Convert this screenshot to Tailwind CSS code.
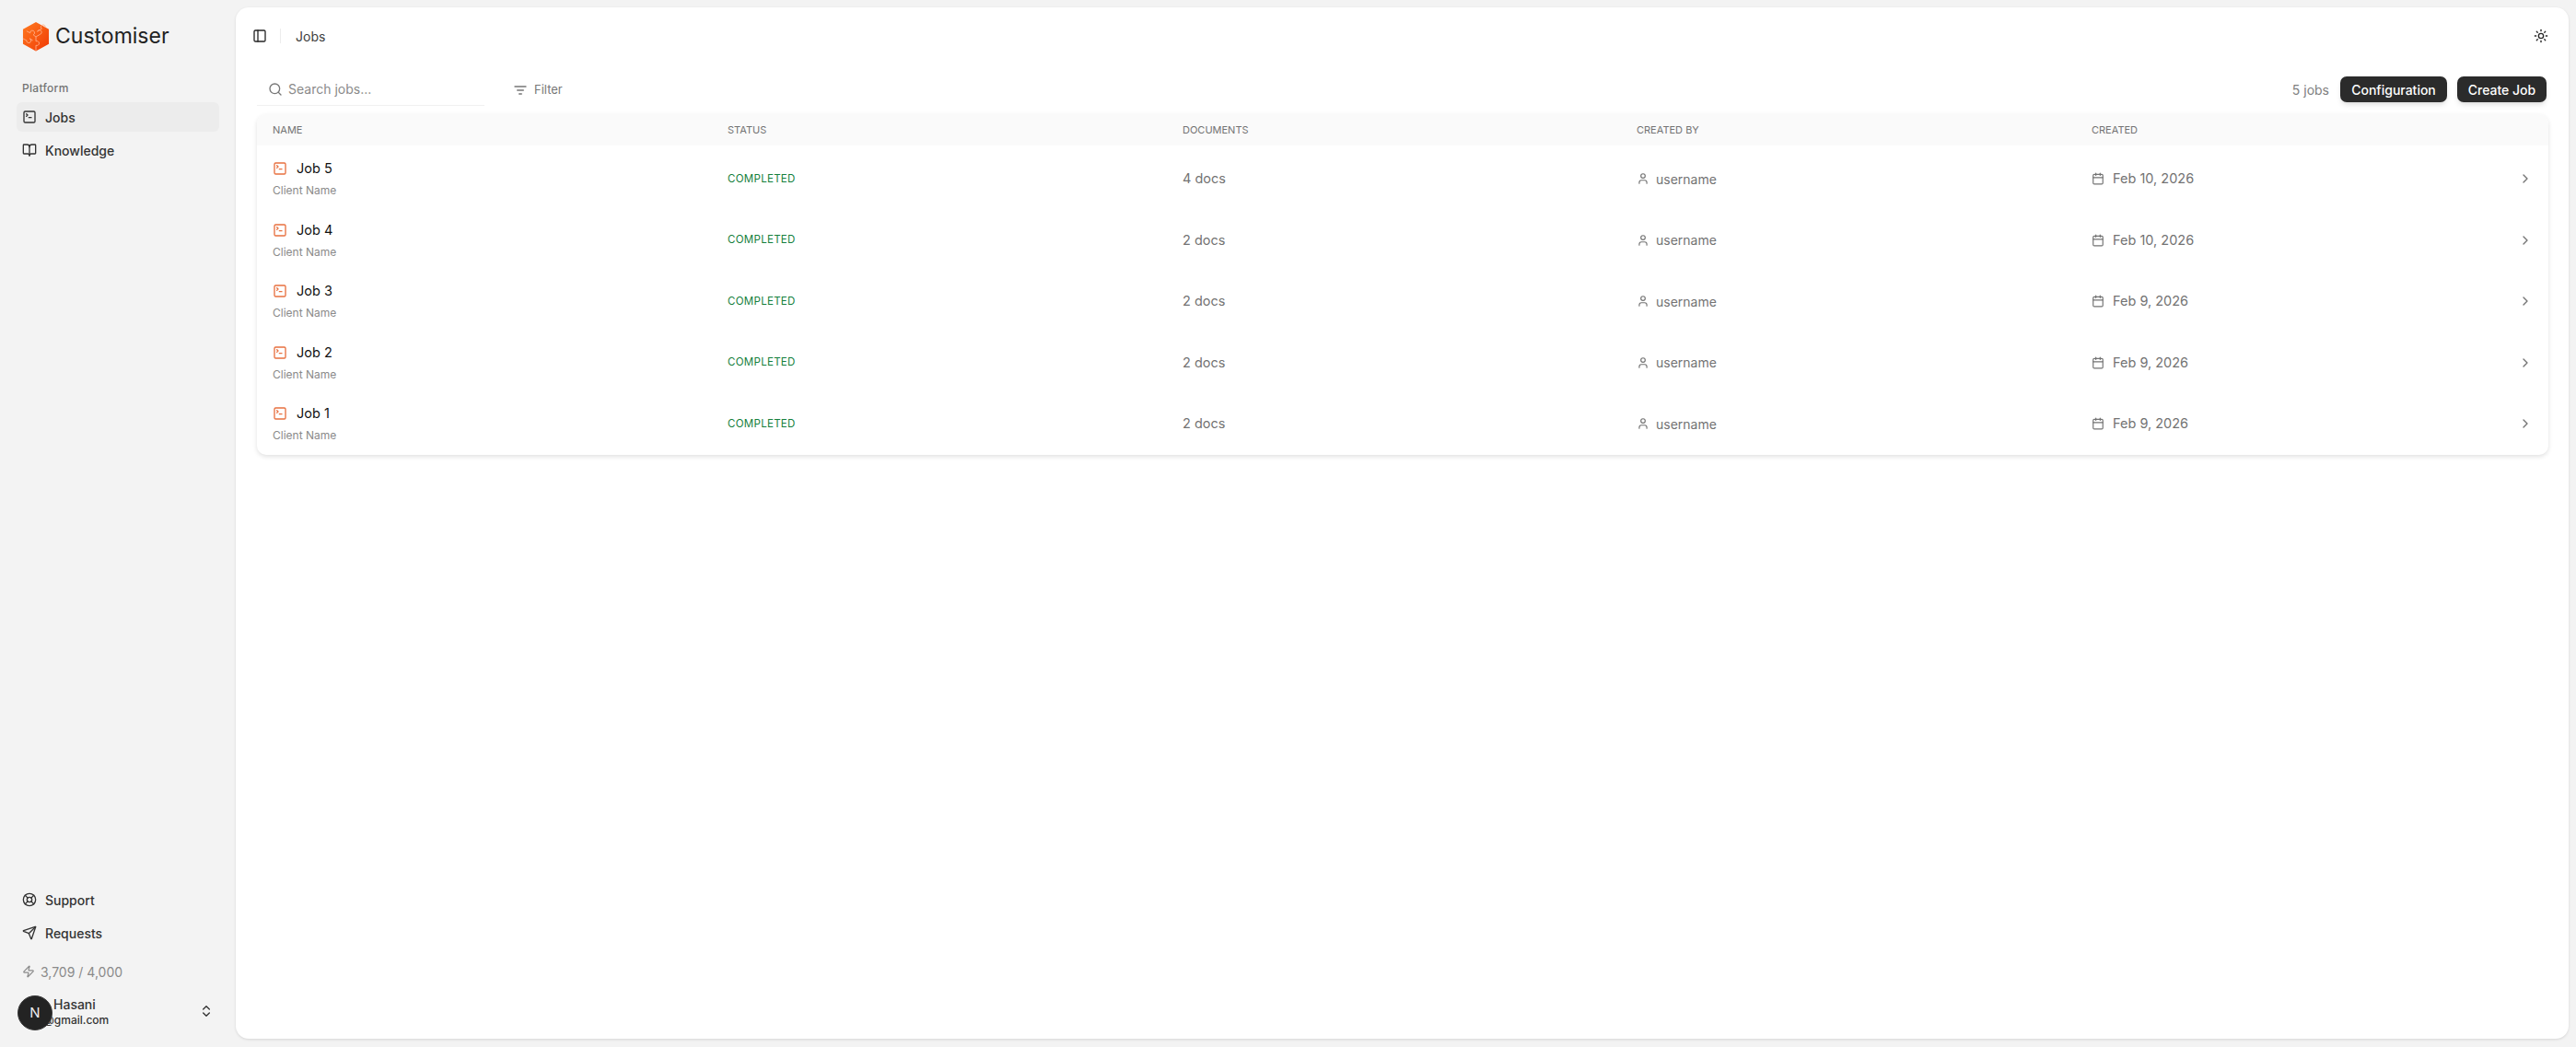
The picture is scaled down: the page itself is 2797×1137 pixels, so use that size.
<!DOCTYPE html>
<html lang="en">
<head>
  <meta charset="UTF-8" />
  <meta name="viewport" content="width=device-width, initial-scale=1.0"/>
  <title>Customiser - Jobs</title>
  <script src="https://cdn.jsdelivr.net/npm/@tailwindcss/browser@4"></script>
</head>
<body class="bg-[#f3f3f3] h-[1137px] overflow-hidden font-['Inter',sans-serif] text-[#262626]">
  <div class="flex h-[1135px] bg-[#f3f3f3]">

    <!-- sidebar -->
    <aside class="w-[256px] shrink-0 flex flex-col px-4 relative">
      <div class="flex items-center gap-[6px] pl-2 pt-[21px] h-[58px]">
        <svg class="w-[30px] h-[34px]" viewBox="0 0 31 34">
          <defs>
            <linearGradient id="cube" x1="0" y1="0" x2="1" y2="1">
              <stop offset="0" stop-color="#ff7a1f"/>
              <stop offset="1" stop-color="#f03a06"/>
            </linearGradient>
          </defs>
          <path d="M15.5 0.5 L30 8.5 V25 L15.5 33 L1 25 V8.5 Z" fill="url(#cube)"/>
          <path d="M5 10.5 L9 12.7 a2.5 2.5 0 1 1 3.5 2 L15.5 17 L20 14.3 a2.5 2.5 0 1 0 -3 -3.2 L22 8 a2.5 2.5 0 1 1 4 -1.5 M15.5 17 V22 a2.5 2.5 0 1 1 0 4.5 V33 M1 19 L5 21 a2.5 2.5 0 1 0 3.5 -2 L12 21" fill="none" stroke="#ffb08a" stroke-width="0.9"/>
        </svg>
        <span class="text-[23px] leading-none text-[#222]">Customiser</span>
      </div>

      <div class="mt-[30px] pl-[8px] text-[12px] leading-4 font-medium text-[#737373] tracking-[0.3px]">Platform</div>
      <nav class="mt-[7px] flex flex-col gap-[4px] mx-[2px]">
        <a class="h-[32px] flex items-center gap-[9px] pl-[6px] rounded-md bg-[#ececec] text-[14px] font-medium text-[#333]">
          <svg class="w-4 h-4" viewBox="0 0 24 24" fill="none" stroke="currentColor" stroke-width="2" stroke-linecap="round" stroke-linejoin="round"><path d="m7 11 2-2-2-2"/><path d="M11 13h4"/><rect width="18" height="18" x="3" y="3" rx="2"/></svg>
          Jobs
        </a>
        <a class="h-[32px] flex items-center gap-[9px] pl-[6px] text-[14px] font-medium text-[#333]">
          <svg class="w-4 h-4" viewBox="0 0 24 24" fill="none" stroke="currentColor" stroke-width="2" stroke-linecap="round" stroke-linejoin="round"><path d="M12 7v14"/><path d="M3 18a1 1 0 0 1-1-1V4a1 1 0 0 1 1-1h5a4 4 0 0 1 4 4 4 4 0 0 1 4-4h5a1 1 0 0 1 1 1v13a1 1 0 0 1-1 1h-6a3 3 0 0 0-3 3 3 3 0 0 0-3-3z"/></svg>
          Knowledge
        </a>
      </nav>

      <div class="mt-auto flex flex-col gap-[4px] mx-[2px]">
        <a class="h-[32px] flex items-center gap-[9px] pl-[6px] text-[14px] font-medium text-[#333]">
          <svg class="w-4 h-4" viewBox="0 0 24 24" fill="none" stroke="currentColor" stroke-width="2" stroke-linecap="round" stroke-linejoin="round"><circle cx="12" cy="12" r="10"/><path d="m4.93 4.93 4.24 4.24"/><path d="m14.83 9.17 4.24-4.24"/><path d="m14.83 14.83 4.24 4.24"/><path d="m9.17 14.83-4.24 4.24"/><circle cx="12" cy="12" r="4"/></svg>
          Support
        </a>
        <a class="h-[32px] flex items-center gap-[9px] pl-[6px] text-[14px] font-medium text-[#333]">
          <svg class="w-4 h-4" viewBox="0 0 24 24" fill="none" stroke="currentColor" stroke-width="2" stroke-linecap="round" stroke-linejoin="round"><path d="M14.536 21.686a.5.5 0 0 0 .937-.024l6.5-19a.496.496 0 0 0-.635-.635l-19 6.5a.5.5 0 0 0-.024.937l7.93 3.18a2 2 0 0 1 1.112 1.11z"/><path d="m21.854 2.147-10.94 10.939"/></svg>
          Requests
        </a>
      </div>

      <div class="mt-[16px] pl-2 h-[20px] flex items-center gap-[6px] text-[14px] text-[#8a8a8a]">
        <svg class="w-[14px] h-[14px]" viewBox="0 0 24 24" fill="none" stroke="currentColor" stroke-width="2" stroke-linecap="round" stroke-linejoin="round"><path d="M4 14a1 1 0 0 1-.78-1.63l9.9-10.2a.5.5 0 0 1 .86.46l-1.92 6.02A1 1 0 0 0 13 10h7a1 1 0 0 1 .78 1.63l-9.9 10.2a.5.5 0 0 1-.86-.46l1.92-6.02A1 1 0 0 0 11 14z"/></svg>
        3,709 / 4,000
      </div>

      <div class="mt-[15px] mb-[17px] h-[38px] flex items-center relative">
        <div class="pl-[31px] flex flex-col">
          <span class="pl-[11px] text-[14px] leading-[18px] font-medium text-[#333]">Hasani</span>
          <span class="text-[12px] leading-[16px] font-medium text-[#333]">@gmail.com</span>
        </div>
        <svg class="absolute left-[200px] top-[10px] w-4 h-4" viewBox="0 0 24 24" fill="none" stroke="#333" stroke-width="2" stroke-linecap="round" stroke-linejoin="round"><path d="m7 15 5 5 5-5"/><path d="m7 9 5-5 5 5"/></svg>
        <div class="absolute left-[3px] top-[1px] w-[38px] h-[38px] rounded-full bg-[#232323] border border-[#3a3a3a] text-[#eee] flex items-center justify-center text-[15px] font-normal">N</div>
      </div>
    </aside>

    <!-- main -->
    <main class="flex-1 mt-[8px] mr-[8px] mb-[7px] bg-white rounded-[14px] shadow-[0_1px_3px_rgba(0,0,0,0.12)] flex flex-col">
      <header class="h-[62px] pl-[18px] pr-[22px] flex items-center">
        <svg class="w-4 h-4 text-[#262626]" viewBox="0 0 24 24" fill="none" stroke="currentColor" stroke-width="2" stroke-linecap="round" stroke-linejoin="round"><rect width="18" height="18" x="3" y="3" rx="2"/><path d="M9 3v18"/></svg>
        <div class="w-px h-4 bg-[#ececec] ml-[14px] mr-[16px]"></div>
        <span class="text-[14px] text-[#404040]">Jobs</span>
        <svg class="ml-auto w-4 h-4 text-[#262626]" viewBox="0 0 24 24" fill="none" stroke="currentColor" stroke-width="2" stroke-linecap="round" stroke-linejoin="round"><circle cx="12" cy="12" r="4"/><path d="M12 2v2"/><path d="M12 20v2"/><path d="m4.93 4.93 1.41 1.41"/><path d="m17.66 17.66 1.41 1.41"/><path d="M2 12h2"/><path d="M20 12h2"/><path d="m6.34 17.66-1.41 1.41"/><path d="m19.07 4.93-1.41 1.41"/></svg>
      </header>

      <div class="pl-[23px] pr-[22px]">
        <!-- toolbar -->
        <div class="h-[28px] mt-[13px] flex items-center">
          <div class="w-[247px] h-[36px] pl-[12px] flex items-center gap-[6px] border-b border-[#f1f1f1]">
            <svg class="w-4 h-4 text-[#777]" viewBox="0 0 24 24" fill="none" stroke="currentColor" stroke-width="2" stroke-linecap="round" stroke-linejoin="round"><path d="m21 21-4.34-4.34"/><circle cx="11" cy="11" r="8"/></svg>
            <span class="text-[14px] text-[#8a8a8a]">Search jobs...</span>
          </div>
          <div class="ml-[31px] mt-[1px] flex items-center gap-[7px] text-[13px] text-[#777]">
            <svg class="w-4 h-4" viewBox="0 0 24 24" fill="none" stroke="currentColor" stroke-width="2" stroke-linecap="round" stroke-linejoin="round"><path d="M3 6h18"/><path d="M7 12h10"/><path d="M10 18h4"/></svg>
            Filter
          </div>
          <span class="ml-auto text-[14px] text-[#808080]">5 jobs</span>
          <button class="ml-[12px] h-[28px] w-[116px] rounded-[7px] bg-[#2b2b2b] text-white text-[14px] font-medium shadow-md">Configuration</button>
          <button class="ml-[11px] mr-[2px] h-[28px] w-[97px] rounded-[7px] bg-[#2b2b2b] text-white text-[14px] font-medium shadow-md">Create Job</button>
        </div>

        <!-- table -->
        <div class="mt-[13px] rounded-[10px] shadow-[0_2px_5px_rgba(0,0,0,0.12)] bg-white" id="jobsTable">
          <div class="h-[34px] bg-[#fafafa] rounded-t-[10px] grid grid-cols-[494px_494px_493px_494px_1fr] items-center pl-[17px] text-[11px] text-[#737373]">
            <div>NAME</div><div>STATUS</div><div>DOCUMENTS</div><div>CREATED BY</div><div>CREATED</div>
          </div>
          <div id="rows" class="pt-[3px]"></div>
        </div>
      </div>
    </main>
  </div>

  <script>
    const jobs = [
      ['Job 5', '4 docs', 'Feb 10, 2026'],
      ['Job 4', '2 docs', 'Feb 10, 2026'],
      ['Job 3', '2 docs', 'Feb 9, 2026'],
      ['Job 2', '2 docs', 'Feb 9, 2026'],
      ['Job 1', '2 docs', 'Feb 9, 2026']
    ];

    const rows = document.getElementById('rows');
    jobs.forEach(([name, docs, date]) => {
      const row = document.createElement('div');
      row.className = 'h-[66.5px] grid grid-cols-[494px_494px_493px_494px_1fr] items-center pl-[17px]';
      row.innerHTML = `
        <div>
          <div class="flex items-center gap-[10px]">
            <svg class="w-4 h-4 text-[#e8703f]" viewBox="0 0 24 24" fill="none" stroke="currentColor" stroke-width="2" stroke-linecap="round" stroke-linejoin="round"><path d="m7 11 2-2-2-2"/><path d="M11 13h4"/><rect width="18" height="18" x="3" y="3" rx="2"/></svg>
            <span class="text-[14.5px] leading-5 text-[#111]">${name}</span>
          </div>
          <div class="mt-[6px] text-[12px] leading-4 text-[#8a8a8a]">Client Name</div>
        </div>
        <div class="text-[11.5px] text-[#15803d] tracking-[0.3px]">COMPLETED</div>
        <div class="text-[14.5px] text-[#737373]">${docs}</div>
        <div class="flex items-center gap-[7px] text-[14px] text-[#737373]">
          <svg class="w-[14px] h-[14px]" viewBox="0 0 24 24" fill="none" stroke="currentColor" stroke-width="2" stroke-linecap="round" stroke-linejoin="round"><path d="M19 21v-2a4 4 0 0 0-4-4H9a4 4 0 0 0-4 4v2"/><circle cx="12" cy="7" r="4"/></svg>
          username
        </div>
        <div class="flex items-center gap-[9px] text-[14.5px] text-[#737373] pr-[17px]">
          <svg class="w-[14px] h-[14px]" viewBox="0 0 24 24" fill="none" stroke="currentColor" stroke-width="2" stroke-linecap="round" stroke-linejoin="round"><path d="M8 2v4"/><path d="M16 2v4"/><rect width="18" height="18" x="3" y="4" rx="2"/><path d="M3 10h18"/></svg>
          ${date}
          <svg class="ml-auto w-4 h-4" viewBox="0 0 24 24" fill="none" stroke="currentColor" stroke-width="2" stroke-linecap="round" stroke-linejoin="round"><path d="m9 18 6-6-6-6"/></svg>
        </div>`;
      rows.appendChild(row);
    });
  </script>
</body>
</html>
